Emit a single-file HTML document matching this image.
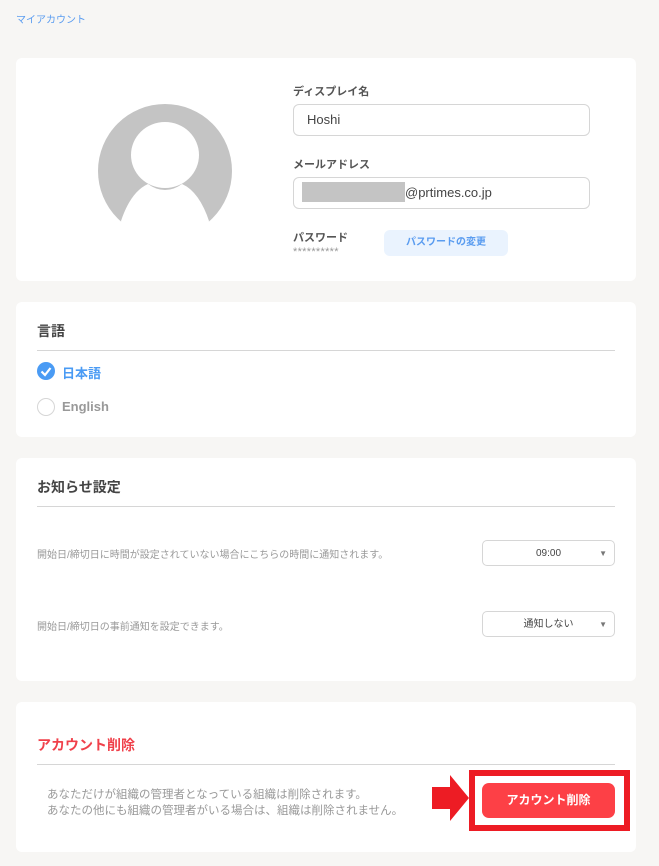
<!DOCTYPE html>
<html><head><meta charset="utf-8"><style>
*{box-sizing:border-box;margin:0;padding:0}
body{width:659px;height:866px;background:#f7f6f4;font-family:"Liberation Sans","Noto Sans CJK JP",sans-serif;position:relative;overflow:hidden;color:#444}
.a{position:absolute}
.card{position:absolute;left:16px;width:620px;background:#fff;border-radius:6px}
.lbl{font-size:11px;font-weight:bold;color:#555}
.inp{position:absolute;left:293px;width:297px;height:32px;border:1px solid #d6d6d6;border-radius:6px;font-size:13px;color:#444;padding:0 13px;line-height:30px}
.h{position:absolute;left:21px;width:578px;font-size:14px;font-weight:bold;color:#444;border-bottom:1px solid #d6d6d6;padding-bottom:9px}
.sel{position:absolute;left:466px;width:133px;height:26px;border:1px solid #d6d6d6;border-radius:5px;font-size:10px;color:#444;text-align:center;line-height:26px}
.sel:after{content:"▼";position:absolute;right:7px;top:0;font-size:8px;color:#777}
.small{font-size:10px;color:#999;position:absolute;left:21px}
</style></head><body>
<div class="a" style="left:16px;top:11px;font-size:10px;color:#5a9cf0">マイアカウント</div>

<div class="card" style="top:58px;height:223px">
 <svg class="a" style="left:82px;top:46px" width="134" height="118" viewBox="0 0 134 118">
  <clipPath id="c"><circle cx="67" cy="67" r="67"/></clipPath>
  <g clip-path="url(#c)">
   <rect width="134" height="134" fill="#c4c4c4"/>
   <ellipse cx="67" cy="51" rx="34" ry="33" fill="#fff"/>
   <path d="M22 120 Q32 88 50 80 Q58 86 67 86 Q76 86 84 80 Q102 88 112 120 Z" fill="#fff"/>
  </g>
 </svg>
 <div class="a lbl" style="left:277px;top:25px">ディスプレイ名</div>
 <div class="a lbl" style="left:277px;top:98px">メールアドレス</div>
 <div class="a lbl" style="left:277px;top:171px">パスワード</div>
 <div class="a" style="left:277px;top:188px;font-size:11px;color:#999;letter-spacing:0.3px">**********</div>
 <div class="a" style="left:368px;top:172px;width:124px;height:26px;background:#eaf3fe;border-radius:6px;color:#5a9cf0;font-size:10px;font-weight:bold;text-align:center;line-height:26px">パスワードの変更</div>
</div>
<div class="inp" style="top:104px">Hoshi</div>
<div class="inp" style="top:177px;padding-left:8px"><span style="display:inline-block;width:103px;height:20px;background:#c4c4c4;vertical-align:middle;margin-top:-3px"></span>@prtimes.co.jp</div>

<div class="card" style="top:302px;height:135px">
 <div class="h" style="top:19px">言語</div>
 <div class="a" style="left:21px;top:60px;width:18px;height:18px;border-radius:50%;background:#4a9bf4"><svg width="18" height="18"><path d="M4.5 9.5 L8 13 L13.5 6" stroke="#fff" stroke-width="2.2" fill="none"/></svg></div>
 <div class="a" style="left:46px;top:61px;font-size:13px;font-weight:bold;color:#4a9bf4">日本語</div>
 <div class="a" style="left:21px;top:96px;width:18px;height:18px;border-radius:50%;border:1.5px solid #d6d6d6"></div>
 <div class="a" style="left:46px;top:97px;font-size:13px;font-weight:bold;color:#999">English</div>
</div>

<div class="card" style="top:458px;height:223px">
 <div class="h" style="top:19px">お知らせ設定</div>
 <div class="small" style="top:88px">開始日/締切日に時間が設定されていない場合にこちらの時間に通知されます。</div>
 <div class="sel" style="top:82px">09:00</div>
 <div class="small" style="top:160px">開始日/締切日の事前通知を設定できます。</div>
 <div class="sel" style="top:153px">通知しない</div>
</div>

<div class="card" style="top:702px;height:150px">
 <div class="h" style="top:33px;color:#f0404a">アカウント削除</div>
 <div class="a" style="left:31px;top:85px;font-size:11.5px;color:#999;line-height:16px">あなただけが組織の管理者となっている組織は削除されます。<br>あなたの他にも組織の管理者がいる場合は、組織は削除されません。</div>
</div>
<svg class="a" style="left:432px;top:775px" width="37" height="46"><path d="M0 12 H18 V0 L37 23 L18 46 V34 H0 Z" fill="#ed1c24"/></svg>
<div class="a" style="left:469px;top:770px;width:161px;height:61px;border:6px solid #ed1c24;background:#fff"></div>
<div class="a" style="left:482px;top:783px;width:133px;height:35px;background:#fd4046;border-radius:7px;color:#fff;font-size:12px;font-weight:bold;text-align:center;line-height:35px">アカウント削除</div>
</body></html>
